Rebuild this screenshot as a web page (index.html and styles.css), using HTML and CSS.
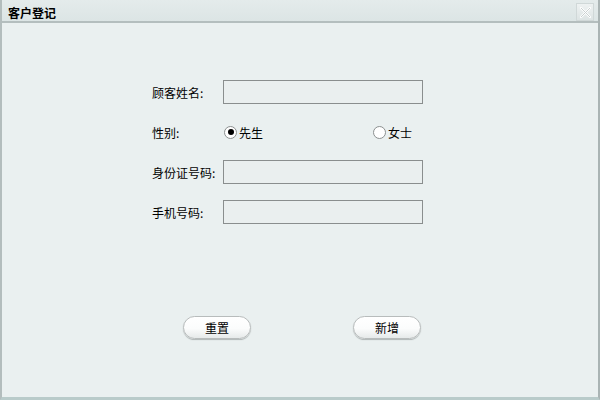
FILE: index.html
```html
<!DOCTYPE html>
<html lang="zh">
<head>
<meta charset="utf-8">
<title>客户登记</title>
<link rel="stylesheet" href="styles.css">
</head>
<body>
<div class="window">
  <div class="titlebar">
    <span class="title">客户登记</span>
    <span class="close">
      <svg width="15" height="15" viewBox="0 0 15 15"><path d="M3 3 L12 12 M12 3 L3 12" stroke="#ffffff" stroke-width="2.2" stroke-linecap="round"/><path d="M3 3 L12 12 M12 3 L3 12" stroke="#c9d0d0" stroke-width="1"/></svg>
    </span>
  </div>
  <div class="content">
    <div class="form">
      <div class="row">
        <label class="label">顾客姓名:</label>
        <input class="field" type="text">
      </div>
      <div class="row">
        <label class="label">性别:</label>
        <div class="radios">
          <span class="radio"><span class="dot checked"></span>先生</span>
          <span class="radio"><span class="dot"></span>女士</span>
        </div>
      </div>
      <div class="row">
        <label class="label">身份证号码:</label>
        <input class="field" type="text">
      </div>
      <div class="row">
        <label class="label">手机号码:</label>
        <input class="field" type="text">
      </div>
    </div>
    <div class="buttons">
      <button class="btn">重置</button>
      <button class="btn">新增</button>
    </div>
  </div>
</div>
</body>
</html>
```
FILE: styles.css
```css
html, body {
  margin: 0;
  padding: 0;
}
body {
  width: 600px;
  height: 400px;
  font-family: "Noto Sans CJK SC", "Liberation Sans", sans-serif;
  font-size: 12px;
  color: #000;
}
.window {
  box-sizing: border-box;
  width: 600px;
  height: 400px;
  background: #eaf0f0;
  border-left: 2px solid #b3bdbd;
  border-right: 2px solid #aab4b4;
  border-bottom: 3px solid #b9cbca;
  display: flex;
  flex-direction: column;
}
.titlebar {
  box-sizing: border-box;
  height: 23px;
  background: linear-gradient(#e4ebeb, #dce5e5);
  border-bottom: 2px solid #b4bebe;
  display: flex;
  align-items: center;
  justify-content: space-between;
  padding: 0 4px 0 6px;
}
.title {
  font-weight: bold;
  font-size: 12px;
  line-height: 14px;
  margin-top: 4px;
}
.close {
  box-sizing: border-box;
  width: 18px;
  height: 18px;
  border: 1px solid #d0d8d8;
  background: linear-gradient(#eef2f2, #dde4e4);
  display: flex;
  align-items: center;
  justify-content: center;
  margin-top: 3px;
}
.content {
  flex: 1;
  display: flex;
  flex-direction: column;
  padding-top: 57px;
}
.form {
  display: flex;
  flex-direction: column;
  gap: 16px;
  padding-left: 150px;
}
.row {
  display: flex;
  align-items: center;
  height: 24px;
}
.label {
  width: 71px;
  white-space: nowrap;
}
.field {
  box-sizing: border-box;
  width: 200px;
  height: 24px;
  margin: 0;
  border: 1px solid #8a8e8e;
  background: #eaefef;
  outline: none;
}
.radios {
  display: flex;
  justify-content: space-between;
  width: 188px;
  padding-left: 1px;
}
.radio {
  display: flex;
  align-items: center;
  gap: 2px;
}
.dot {
  box-sizing: border-box;
  width: 13px;
  height: 13px;
  border-radius: 50%;
  border: 1px solid #8c9090;
  background: #fff;
  position: relative;
}
.dot.checked::after {
  content: "";
  position: absolute;
  left: 2.5px;
  top: 2.5px;
  width: 6px;
  height: 6px;
  border-radius: 50%;
  background: #000;
}
.buttons {
  display: flex;
  gap: 102px;
  padding-left: 181px;
  margin-top: 92px;
}
.btn {
  box-sizing: border-box;
  width: 68px;
  height: 23px;
  margin: 0;
  border: 1px solid #b8bcbc;
  border-radius: 12px;
  background: linear-gradient(#ffffff 0%, #fbfcfc 55%, #e6eaea 100%);
  box-shadow: 0 1px 1px #b0b6b6;
  font-family: "Noto Sans CJK SC", "Liberation Sans", sans-serif;
  font-size: 12px;
  color: #000;
  padding: 0;
}
```
